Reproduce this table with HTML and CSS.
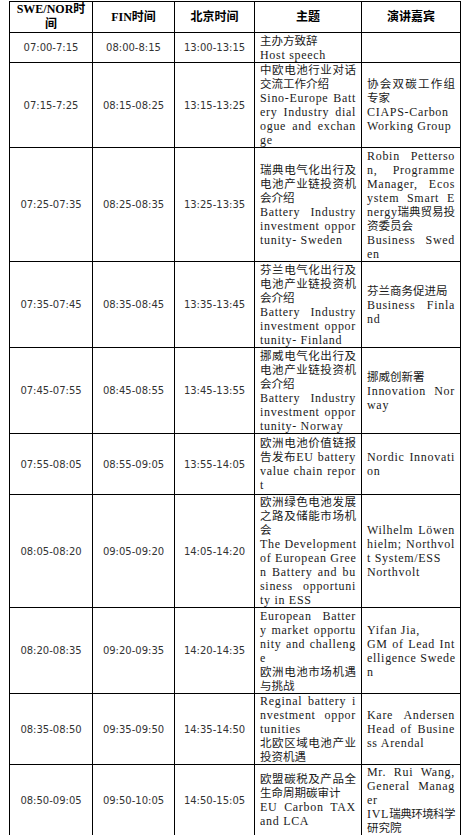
FILE: index.html
```html
<!DOCTYPE html>
<html lang="zh">
<head>
<meta charset="utf-8">
<title>Agenda</title>
<link rel="stylesheet" href="styles.css">
</head>
<body>
<table class="agenda">
  <colgroup>
    <col class="c1"><col class="c2"><col class="c3"><col class="c4"><col class="c5">
  </colgroup>
  <thead>
    <tr class="h31">
      <th>SWE/NOR时间</th>
      <th>FIN时间</th>
      <th>北京时间</th>
      <th>主题</th>
      <th>演讲嘉宾</th>
    </tr>
  </thead>
  <tbody>
    <tr class="h30">
      <td class="t">07:00-7:15</td><td class="t">08:00-8:15</td><td class="t">13:00-13:15</td>
      <td class="x"><span class="l c">主办方致辞</span><span class="l">Host speech</span></td>
      <td class="x"></td>
    </tr>
    <tr class="h85">
      <td class="t">07:15-7:25</td><td class="t">08:15-08:25</td><td class="t">13:15-13:25</td>
      <td class="x"><span class="l j c">中欧电池行业对话</span><span class="l c">交流工作介绍</span><span class="l j">Sino-Europe Batt</span><span class="l j">ery Industry dial</span><span class="l j">ogue and exchan</span><span class="l">ge</span></td>
      <td class="x"><span class="l j c">协会双碳工作组</span><span class="l c">专家</span><span class="l">CIAPS-Carbon</span><span class="l">Working Group</span></td>
    </tr>
    <tr class="h114">
      <td class="t">07:25-07:35</td><td class="t">08:25-08:35</td><td class="t">13:25-13:35</td>
      <td class="x"><span class="l j c">瑞典电气化出行及</span><span class="l j c">电池产业链投资机</span><span class="l c">会介绍</span><span class="l j">Battery Industry</span><span class="l j">investment oppor</span><span class="l">tunity- Sweden</span></td>
      <td class="x"><span class="l j">Robin Petterso</span><span class="l j">n, Programme</span><span class="l j">Manager, Ecos</span><span class="l j">ystem Smart E</span><span class="l j">nergy<span class="c">瑞典贸易投</span></span><span class="l c">资委员会</span><span class="l j">Business Swed</span><span class="l">en</span></td>
    </tr>
    <tr class="h86">
      <td class="t">07:35-07:45</td><td class="t">08:35-08:45</td><td class="t">13:35-13:45</td>
      <td class="x"><span class="l j c">芬兰电气化出行及</span><span class="l j c">电池产业链投资机</span><span class="l c">会介绍</span><span class="l j">Battery Industry</span><span class="l j">investment oppor</span><span class="l">tunity- Finland</span></td>
      <td class="x"><span class="l c">芬兰商务促进局</span><span class="l j">Business Finla</span><span class="l">nd</span></td>
    </tr>
    <tr class="h86">
      <td class="t">07:45-07:55</td><td class="t">08:45-08:55</td><td class="t">13:45-13:55</td>
      <td class="x"><span class="l j c">挪威电气化出行及</span><span class="l j c">电池产业链投资机</span><span class="l c">会介绍</span><span class="l j">Battery Industry</span><span class="l j">investment oppor</span><span class="l">tunity- Norway</span></td>
      <td class="x"><span class="l c">挪威创新署</span><span class="l j">Innovation Nor</span><span class="l">way</span></td>
    </tr>
    <tr class="h61">
      <td class="t">07:55-08:05</td><td class="t">08:55-09:05</td><td class="t">13:55-14:05</td>
      <td class="x"><span class="l j c">欧洲电池价值链报</span><span class="l j"><span class="c">告发布</span>EU battery</span><span class="l j">value chain repor</span><span class="l">t</span></td>
      <td class="x"><span class="l j">Nordic Innovati</span><span class="l">on</span></td>
    </tr>
    <tr class="h112">
      <td class="t">08:05-08:20</td><td class="t">09:05-09:20</td><td class="t">14:05-14:20</td>
      <td class="x"><span class="l j c">欧洲绿色电池发展</span><span class="l j c">之路及储能市场机</span><span class="l c">会</span><span class="l j">The Development</span><span class="l j">of European Gree</span><span class="l j">n Battery and bu</span><span class="l j">siness opportuni</span><span class="l">ty in ESS</span></td>
      <td class="x"><span class="l j">Wilhelm Löwen</span><span class="l j">hielm; Northvol</span><span class="l">t System/ESS</span><span class="l">Northvolt</span></td>
    </tr>
    <tr class="h86">
      <td class="t">08:20-08:35</td><td class="t">09:20-09:35</td><td class="t">14:20-14:35</td>
      <td class="x"><span class="l j">European Batter</span><span class="l j">y market opportu</span><span class="l j">nity and challeng</span><span class="l">e</span><span class="l j c">欧洲电池市场机遇</span><span class="l c">与挑战</span></td>
      <td class="x"><span class="l">Yifan Jia,</span><span class="l j">GM of Lead Int</span><span class="l j">elligence Swede</span><span class="l">n</span></td>
    </tr>
    <tr class="h71">
      <td class="t">08:35-08:50</td><td class="t">09:35-09:50</td><td class="t">14:35-14:50</td>
      <td class="x"><span class="l j">Reginal battery i</span><span class="l j">nvestment oppor</span><span class="l">tunities</span><span class="l j c">北欧区域电池产业</span><span class="l c">投资机遇</span></td>
      <td class="x"><span class="l j">Kare Andersen</span><span class="l j">Head of Busine</span><span class="l">ss Arendal</span></td>
    </tr>
    <tr class="h71">
      <td class="t">08:50-09:05</td><td class="t">09:50-10:05</td><td class="t">14:50-15:05</td>
      <td class="x"><span class="l j c">欧盟碳税及产品全</span><span class="l c">生命周期碳审计</span><span class="l j">EU Carbon TAX</span><span class="l">and LCA</span></td>
      <td class="x"><span class="l j">Mr. Rui Wang,</span><span class="l j">General Manag</span><span class="l">er</span><span class="l j">IVL<span class="c k">瑞典环境科学</span></span><span class="l c">研究院</span></td>
    </tr>
  </tbody>
</table>
</body>
</html>
```
FILE: styles.css
```css
html, body {
  margin: 0;
  padding: 0;
  background: #fff;
}

.agenda {
  margin: 1px 0 0 9px;
  width: 451px;
  border-collapse: collapse;
  table-layout: fixed;
  color: #111;
}

.c1 { width: 83px; }
.c2 { width: 82px; }
.c3 { width: 80px; }
.c4 { width: 107px; }
.c5 { width: 99px; }

.agenda th,
.agenda td {
  border: 1px solid #000;
  padding: 0 5px;
  vertical-align: middle;
}

.agenda th {
  font-family: "Liberation Serif", "Noto Sans CJK SC", serif;
  font-weight: 700;
  font-size: 12px;
  line-height: 15px;
  text-align: center;
  color: #000;
}

.h31 { height: 31px; }
.h30 { height: 30px; }
.h85 { height: 85px; }
.h114 { height: 114px; }
.h86 { height: 86px; }
.h61 { height: 61px; }
.h112 { height: 112px; }
.h71 { height: 71px; }

.t {
  font-family: "DejaVu Sans", Verdana, sans-serif;
  font-size: 10px;
  text-align: center;
  color: #333;
  white-space: nowrap;
}

.x {
  font-family: "Liberation Serif", "Noto Sans CJK SC", serif;
  font-size: 12px;
  line-height: 14px;
  letter-spacing: 0.7px;
  color: #1a1a1a;
}

.l {
  display: block;
  height: 14px;
  white-space: nowrap;
  text-align: left;
}

.c {
  font-size: 11.5px;
  letter-spacing: 0;
}

.k {
  letter-spacing: -0.6px;
}

.j {
  text-align: justify;
  text-align-last: justify;
}
```
